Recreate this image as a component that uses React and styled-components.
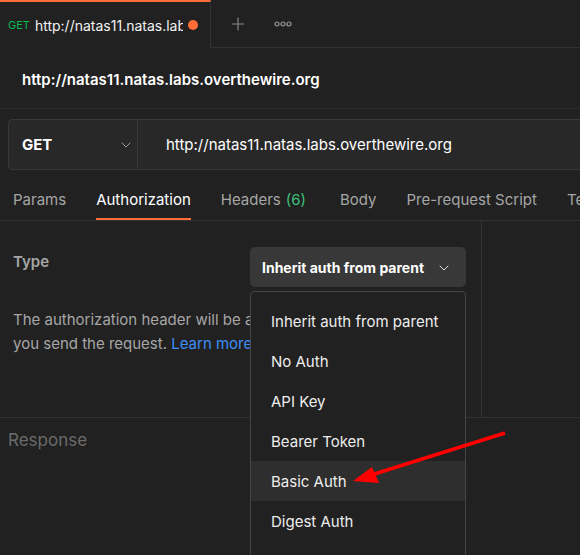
import React from "react";
import styled, { createGlobalStyle } from "styled-components";
import { ChevronDown, Plus } from "lucide-react";

const GlobalStyle = createGlobalStyle`
  html, body {
    margin: 0;
    padding: 0;
    background: #212121;
  }
  body {
    font-family: Inter, "Noto Sans", "Liberation Sans", sans-serif;
    color: #ffffff;
  }
`;

const Page = styled.div`
  position: relative;
  width: 580px;
  height: 555px;
  overflow: hidden;
  background: #212121;
`;

const TopBar = styled.div`
  display: flex;
  height: 48px;
`;

const ActiveTab = styled.div`
  width: 211px;
  box-sizing: border-box;
  border-top: 2px solid #ff6c37;
  border-right: 1px solid #333333;
  display: flex;
  align-items: center;
  padding: 0 8px;
  gap: 5px;
`;

const MethodTag = styled.span`
  font-size: 11px;
  color: #0cbb52;
  flex-shrink: 0;
`;

const TabUrl = styled.span`
  font-size: 14px;
  color: #f2f2f2;
  white-space: nowrap;
  overflow: hidden;
  width: 148px;
  flex-shrink: 0;
`;

const Dot = styled.span`
  width: 10px;
  height: 10px;
  border-radius: 50%;
  background: #ff6c37;
  flex-shrink: 0;
`;

const TabRest = styled.div`
  flex: 1;
  display: flex;
  align-items: center;
  border-bottom: 1px solid #333333;
  padding-left: 17px;
  gap: 25px;
  color: #8a8a8a;
`;

const IconBtn = styled.span`
  display: flex;
  align-items: center;
  justify-content: center;
  width: 20px;
  height: 20px;
`;

const TitleBar = styled.div`
  height: 61px;
  box-sizing: border-box;
  display: flex;
  align-items: center;
  padding: 3px 0 0 22px;
  border-bottom: 1px solid #2b2b2b;
  font-size: 15px;
  font-weight: 600;
  color: #ffffff;
`;

const UrlRow = styled.div`
  padding: 10px 0 0 8px;
`;

const UrlBox = styled.div`
  display: flex;
  height: 51px;
  box-sizing: border-box;
  width: 600px;
  border: 1px solid #383838;
  border-radius: 4px;
  background: #282828;
`;

const MethodSelect = styled.div`
  width: 129px;
  box-sizing: border-box;
  border-right: 1px solid #383838;
  display: flex;
  align-items: center;
  justify-content: space-between;
  padding: 0 3px 0 13px;
  font-size: 15px;
  font-weight: 700;
  color: #ffffff;
`;

const UrlInput = styled.div`
  display: flex;
  align-items: center;
  padding-left: 28px;
  font-size: 15px;
  color: #ffffff;
`;

const RequestTabs = styled.div`
  display: flex;
  margin-top: 9px;
  height: 42px;
  box-sizing: border-box;
  border-bottom: 1px solid #333333;
  padding-left: 13px;
  gap: 30px;
  white-space: nowrap;
`;

const RequestTab = styled.div`
  display: flex;
  align-items: center;
  box-sizing: border-box;
  height: 41px;
  font-size: 15px;
  color: ${(p) => (p.$active ? "#ffffff" : "#a6a6a6")};
  border-bottom: 2px solid ${(p) => (p.$active ? "#ff6c37" : "transparent")};
  padding-top: 2px;
`;

const Count = styled.span`
  color: #3cc07a;
  margin-left: 5px;
  margin-right: 4px;
`;

const AuthPane = styled.div`
  display: grid;
  grid-template-columns: 482px 1fr;
  height: 196px;
`;

const AuthLeft = styled.div`
  border-right: 1px solid #333333;
  padding: 26px 14px 0 13px;
`;

const TypeRow = styled.div`
  display: flex;
  align-items: flex-start;
`;

const TypeLabel = styled.div`
  width: 237px;
  font-size: 15px;
  font-weight: 600;
  color: #a6a6a6;
  padding-top: 5px;
`;

const DropdownWrap = styled.div`
  position: relative;
`;

const DropdownButton = styled.div`
  width: 216px;
  height: 40px;
  box-sizing: border-box;
  border-radius: 5px;
  background: #383838;
  display: flex;
  align-items: center;
  justify-content: space-between;
  padding: 1px 14px 0 12px;
  font-size: 14px;
  font-weight: 700;
  color: #ffffff;
`;

const Menu = styled.div`
  position: absolute;
  top: 44px;
  left: 0;
  width: 216px;
  box-sizing: border-box;
  border: 1px solid #454545;
  border-radius: 4px;
  background: #212121;
  padding-top: 9px;
  padding-bottom: 40px;
  z-index: 2;
`;

const MenuItem = styled.div`
  height: 40px;
  display: flex;
  align-items: center;
  padding-left: 20px;
  font-size: 15px;
  color: #ededed;
  background: ${(p) => (p.$hover ? "#2e2e2e" : "transparent")};
`;

const Description = styled.p`
  margin: 21px 0 0;
  font-size: 15px;
  line-height: 24px;
  color: #a6a6a6;
`;

const LearnMore = styled.span`
  color: #3d8ef7;
`;

const ResponsePane = styled.div`
  border-top: 1px solid #333333;
  padding: 12px 8px;
  font-size: 17px;
  color: #6b6b6b;
`;

const ArrowMark = styled.svg`
  position: absolute;
  left: 340px;
  top: 420px;
  pointer-events: none;
  z-index: 3;
`;

const MoreIcon = () => (
  <svg width="18" height="6" viewBox="0 0 18 6">
    {[3, 9, 15].map((cx) => (
      <circle key={cx} cx={cx} cy="3" r="2" fill="none" stroke="#9a9a9a" strokeWidth="1.2" />
    ))}
  </svg>
);

const authTypes = [
  "Inherit auth from parent",
  "No Auth",
  "API Key",
  "Bearer Token",
  "Basic Auth",
  "Digest Auth",
];

export default function App() {
  return (
    <Page>
      <GlobalStyle />
      <TopBar>
        <ActiveTab>
          <MethodTag>GET</MethodTag>
          <TabUrl>http://natas11.natas.labs.overthewire.org</TabUrl>
          <Dot />
        </ActiveTab>
        <TabRest>
          <IconBtn>
            <Plus size={20} strokeWidth={1.4} color="#8a8a8a" />
          </IconBtn>
          <IconBtn>
            <MoreIcon />
          </IconBtn>
        </TabRest>
      </TopBar>

      <TitleBar>http://natas11.natas.labs.overthewire.org</TitleBar>

      <UrlRow>
        <UrlBox>
          <MethodSelect>
            GET
            <ChevronDown size={16} strokeWidth={1.5} color="#9a9a9a" />
          </MethodSelect>
          <UrlInput>http://natas11.natas.labs.overthewire.org</UrlInput>
        </UrlBox>
      </UrlRow>

      <RequestTabs>
        <RequestTab>Params</RequestTab>
        <RequestTab $active>Authorization</RequestTab>
        <RequestTab>
          Headers<Count>(6)</Count>
        </RequestTab>
        <RequestTab>Body</RequestTab>
        <RequestTab>Pre-request Script</RequestTab>
        <RequestTab>Tests</RequestTab>
      </RequestTabs>

      <AuthPane>
        <AuthLeft>
          <TypeRow>
            <TypeLabel>Type</TypeLabel>
            <DropdownWrap>
              <DropdownButton>
                Inherit auth from parent
                <ChevronDown size={16} strokeWidth={1.5} color="#e0e0e0" />
              </DropdownButton>
              <Menu>
                {authTypes.map((t) => (
                  <MenuItem key={t} $hover={t === "Basic Auth"}>
                    {t}
                  </MenuItem>
                ))}
              </Menu>
            </DropdownWrap>
          </TypeRow>
          <Description>
            The authorization header will be automatically generated when you
            send the request. <LearnMore>Learn more about authorization</LearnMore>
          </Description>
        </AuthLeft>
        <div />
      </AuthPane>

      <ResponsePane>Response</ResponsePane>

      <ArrowMark width="180" height="80" viewBox="0 0 180 80">
        <line x1="165" y1="13" x2="28" y2="56" stroke="#ff0000" strokeWidth="3.5" />
        <polygon points="13,61 32,47 39,63" fill="#ff0000" />
      </ArrowMark>
    </Page>
  );
}
